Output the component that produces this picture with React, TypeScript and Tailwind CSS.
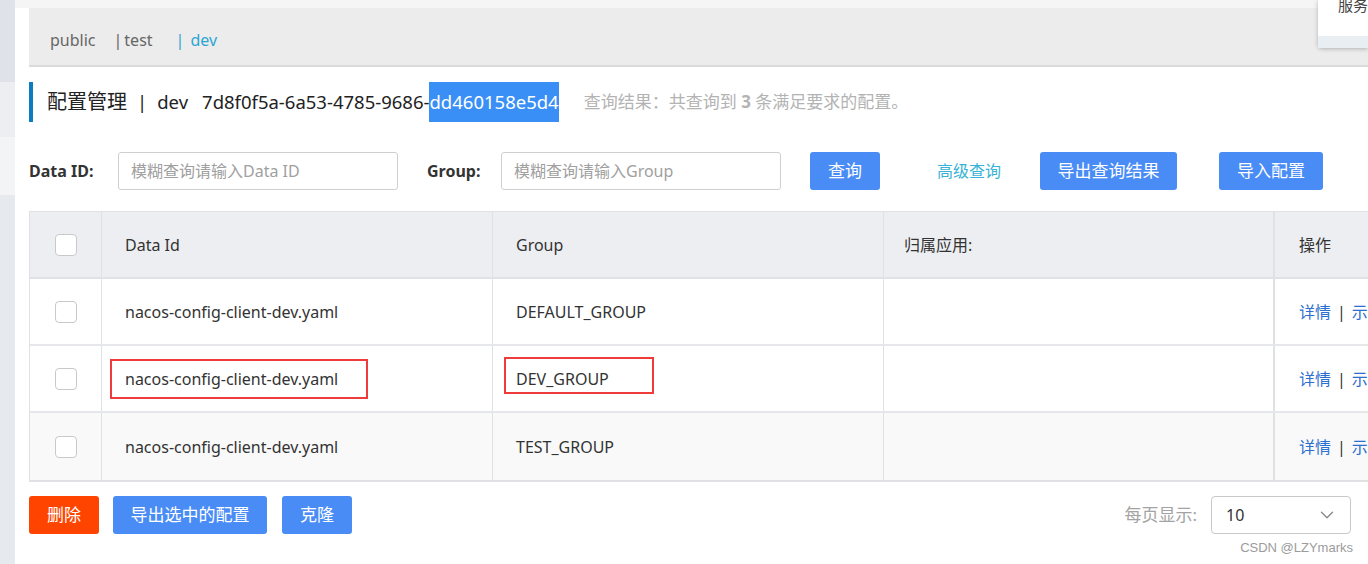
import { ChevronDown } from "lucide-react";

const font = { fontFamily: '"Noto Sans", "Noto Sans CJK SC", sans-serif' };

const rows = [
  { id: "nacos-config-client-dev.yaml", group: "DEFAULT_GROUP", marked: false, bg: "bg-white" },
  { id: "nacos-config-client-dev.yaml", group: "DEV_GROUP", marked: true, bg: "bg-white" },
  { id: "nacos-config-client-dev.yaml", group: "TEST_GROUP", marked: false, bg: "bg-[#f9f9fa]" },
];

const Check = () => (
  <div className="w-[22px] h-[22px] rounded-[4px] border border-[#c9c9c9] bg-white" />
);

const Btn = ({ label, w, red }: { label: string; w: string; red?: boolean }) => (
  <button
    className={`${w} h-[38px] rounded-[3px] text-white text-[17px] flex items-center justify-center ${
      red ? "bg-[#ff4400]" : "bg-[#4a8cf6]"
    }`}
  >
    {label}
  </button>
);

export default function App() {
  return (
    <div
      className="w-[1368px] h-[564px] bg-white flex overflow-hidden relative text-[#333]"
      style={font}
    >
      {/* sidebar edge */}
      <div className="w-[15px] shrink-0 flex flex-col">
        <div className="h-[82px] bg-[#dfe3e9]" />
        <div className="h-[55px] bg-[#eceef2]" />
        <div className="h-[58px] bg-[#f3f4f6]" />
        <div className="flex-1 bg-[#e6e9ee]" />
      </div>

      {/* main */}
      <div className="flex-1 min-w-0 flex flex-col pl-[14px]">
        <div className="h-[8px] bg-[#f5f5f5] -ml-[14px]" />
        {/* namespace tabs */}
        <div className="h-[59px] bg-[#ececec] border-b-2 border-[#dadada] flex items-center pt-[6px] pl-[21px] text-[16px] text-[#666]">
          <span>public</span>
          <span className="ml-[18px]">|</span>
          <span className="ml-[2px]">test</span>
          <span className="ml-[23px] text-[#2ea6d2]">|</span>
          <span className="ml-[6px] text-[#2ea6d2]">dev</span>
        </div>

        {/* title */}
        <div className="mt-[15px] h-[40px] flex items-center">
          <div className="w-[4px] h-full bg-[#0c7cc0]" />
          <div className="ml-[14px] flex items-center h-full text-[18.5px] text-[#222]">
            <span className="text-[20px]">配置管理</span>
            <span className="ml-[10px]">|</span>
            <span className="ml-[10px]">dev</span>
            <span className="ml-[14px]">7d8f0f5a-6a53-4785-9686-</span>
            <span className="h-full flex items-center bg-[#3a8ff6] text-white">dd460158e5d4</span>
          </div>
          <span className="ml-[25px] text-[17px] text-[#b3b3b3]">
            查询结果：共查询到 <b className="font-bold">3</b> 条满足要求的配置。
          </span>
        </div>

        {/* search */}
        <div className="mt-[30px] h-[38px] flex items-center">
          <span className="w-[89px] text-[16px] font-bold text-[#333]">Data ID:</span>
          <div className="w-[280px] h-full border border-[#cfcfcf] rounded-[3px] flex items-center pl-[12px] text-[16px] text-[#a0a0a0]">
            模糊查询请输入Data ID
          </div>
          <span className="ml-[29px] w-[74px] text-[16px] font-bold text-[#333]">Group:</span>
          <div className="w-[280px] h-full border border-[#cfcfcf] rounded-[3px] flex items-center pl-[12px] text-[16px] text-[#a0a0a0]">
            模糊查询请输入Group
          </div>
          <div className="ml-[29px]">
            <Btn label="查询" w="w-[70px]" />
          </div>
          <span className="ml-[57px] text-[16px] text-[#38b3d6]">高级查询</span>
          <div className="ml-[39px]">
            <Btn label="导出查询结果" w="w-[137px]" />
          </div>
          <div className="ml-[42px]">
            <Btn label="导入配置" w="w-[104px]" />
          </div>
        </div>

        {/* table */}
        <div className="mt-[21px] w-[1420px] border-t border-l border-b-2 border-[#dfe1e5] text-[16px]">
          <div className="grid grid-cols-[72px_391px_391px_391px_175px] h-[67px] bg-[#eceef2] border-b-2 border-[#dfe1e5]">
            <div className="flex items-center justify-center border-r border-[#dfe1e5]">
              <Check />
            </div>
            <div className="flex items-center pl-[23px] border-r border-[#dfe1e5]">Data Id</div>
            <div className="flex items-center pl-[23px] border-r border-[#dfe1e5]">Group</div>
            <div className="flex items-center pl-[20px] border-r-2 border-[#dfe1e5]">归属应用:</div>
            <div className="flex items-center pl-[24px]">操作</div>
          </div>
          {rows.map((r, i) => (
            <div
              key={i}
              className={`grid grid-cols-[72px_391px_391px_391px_175px] h-[67px] ${r.bg} ${
                i < rows.length - 1 ? "border-b-2 border-[#e6e7ea]" : ""
              }`}
            >
              <div className="flex items-center justify-center border-r border-[#dfe1e5]">
                <Check />
              </div>
              <div className="flex items-center pl-[23px] border-r border-[#dfe1e5]">
                <span className="relative">
                  {r.id}
                  {r.marked && (
                    <span className="absolute -left-[15px] -top-[8px] w-[258px] h-[40px] border-2 border-[#f03b3b]" />
                  )}
                </span>
              </div>
              <div className="flex items-center pl-[23px] border-r border-[#dfe1e5]">
                <span className="relative">
                  {r.group}
                  {r.marked && (
                    <span className="absolute -left-[12px] -top-[10px] w-[150px] h-[37px] border-2 border-[#f03b3b]" />
                  )}
                </span>
              </div>
              <div className="border-r-2 border-[#dfe1e5]" />
              <div className="flex items-center pl-[24px] text-[#2b6fd0] whitespace-nowrap">
                详情<span className="mx-[6px] text-[#333]">|</span>示例代码
              </div>
            </div>
          ))}
        </div>

        {/* footer */}
        <div className="mt-[14px] h-[38px] flex items-center">
          <Btn label="删除" w="w-[70px]" red />
          <div className="ml-[14px]">
            <Btn label="导出选中的配置" w="w-[154px]" />
          </div>
          <div className="ml-[15px]">
            <Btn label="克隆" w="w-[70px]" />
          </div>
          <span className="ml-auto text-[17px] text-[#a3a3a3]">每页显示:</span>
          <div className="ml-[14px] mr-[17px] w-[140px] h-full border border-[#c9c9c9] rounded-[4px] flex items-center justify-between pl-[14px] pr-[12px]">
            <span className="text-[16px] text-[#333]">10</span>
            <ChevronDown size={22} strokeWidth={1.5} className="text-[#8a8a8a]" />
          </div>
        </div>
      </div>

      {/* server popup at top right */}
      <div className="absolute right-0 top-0 w-[50px] h-[48px] bg-white rounded-bl-[4px] shadow-[0_1px_4px_rgba(0,0,0,0.25)] flex flex-col">
        <div className="flex-1 pl-[20px] -mt-[6px] text-[15px] text-[#444]">服务</div>
        <div className="h-[12px] bg-[#e9eef3]" />
      </div>

      {/* watermark */}
      <div
        className="absolute right-[15px] bottom-[7px] text-[13px] text-[#9b9b9b]"
        style={{ fontFamily: '"Liberation Sans", sans-serif' }}
      >
        CSDN @LZYmarks
      </div>
    </div>
  );
}
